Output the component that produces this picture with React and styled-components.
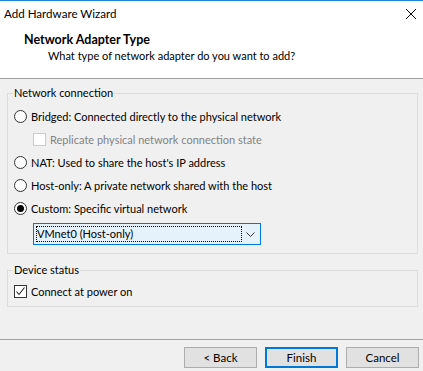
import React from "react";
import styled, { createGlobalStyle } from "styled-components";

const Global = createGlobalStyle`
  html, body { margin: 0; padding: 0; }
  body {
    font-family: Lato, "Noto Sans", "Liberation Sans", sans-serif;
    font-size: 11px;
    color: #000;
    background: #fff;
  }
`;

const Window = styled.div`
  width: 423px;
  height: 371px;
  overflow: hidden;
  display: flex;
  flex-direction: column;
  border-top: 1px solid #1a86d9;
  box-sizing: border-box;
  background: #f0f0f0;
`;

const Top = styled.div`
  background: #fff;
  height: 77px;
  display: flex;
  flex-direction: column;
  border-bottom: 1px solid #a0a0a0;
`;

const TitleBar = styled.div`
  height: 26px;
  display: flex;
  align-items: center;
  justify-content: space-between;
  padding: 0 7px 0 4px;
`;

const Title = styled.span`
  font-size: 11.6px;
  line-height: 16px;
`;

const CloseBtn = styled.div`
  width: 10px;
  height: 10px;
  display: flex;
  svg { display: block; }
`;

const Header = styled.div`
  padding: 5px 0 0 24px;
  display: flex;
  flex-direction: column;
`;

const HeadTitle = styled.div`
  font-weight: bold;
  font-size: 12.5px;
  line-height: 16px;
`;

const HeadSub = styled.div`
  padding-left: 24px;
  line-height: 16px;
`;

const Body = styled.div`
  flex: 1;
  padding: 6px 5px 0 7px;
  display: flex;
  flex-direction: column;
  gap: 8px;
`;

const Group = styled.fieldset`
  margin: 0;
  border: 1px solid #dcdcdc;
  padding: ${(p) => p.$pad};
  display: flex;
  flex-direction: column;
  legend {
    padding: 0 1px;
    margin-left: 5px;
    line-height: 16px;
  }
`;

const Row = styled.label`
  height: 23px;
  display: flex;
  align-items: center;
  gap: 4px;
  padding-left: ${(p) => p.$indent || 6}px;
  color: ${(p) => (p.$disabled ? "#838383" : "#000")};
`;

const Radio = styled.span`
  width: 13px;
  height: 13px;
  box-sizing: border-box;
  border-radius: 50%;
  border: 1px solid #333;
  background: #fff;
  display: flex;
  align-items: center;
  justify-content: center;
  &::after {
    content: "";
    width: 7px;
    height: 7px;
    border-radius: 50%;
    background: ${(p) => (p.$on ? "#000" : "transparent")};
  }
`;

const Box = styled.span`
  width: 13px;
  height: 13px;
  box-sizing: border-box;
  border: 1px solid ${(p) => (p.$disabled ? "#cccccc" : "#333")};
  background: #fff;
  display: flex;
  align-items: center;
  justify-content: center;
  svg { display: block; }
`;

const Select = styled.div`
  margin: 3px 0 0 25px;
  width: 228px;
  height: 22px;
  box-sizing: border-box;
  border: 1px solid #0078d7;
  background: #e5f1fb;
  display: flex;
  align-items: center;
  padding: 0 5px 0 2px;
  justify-content: space-between;
`;

const Focus = styled.span`
  width: 206px;
  height: 16px;
  box-sizing: border-box;
  border: 1px dotted #000;
  line-height: 14px;
`;

const Footer = styled.div`
  height: 32px;
  border-top: 1px solid #a0a0a0;
  display: flex;
  justify-content: flex-end;
  align-items: flex-start;
  gap: 8px;
  padding: 7px 4px 0 0;
  box-sizing: border-box;
`;

const Button = styled.button`
  width: 73px;
  height: 21px;
  box-sizing: border-box;
  font: inherit;
  font-size: 11.5px;
  color: #000;
  background: #e1e1e1;
  border: ${(p) => (p.$default ? "2px solid #0078d7" : "1px solid #adadad")};
  padding: 0;
`;

const Chevron = () => (
  <svg width="9" height="5" viewBox="0 0 9 5">
    <path d="M0.5 0.5 L4.5 4.5 L8.5 0.5" fill="none" stroke="#333" strokeWidth="1" />
  </svg>
);

const Check = () => (
  <svg width="11" height="11" viewBox="0 0 11 11">
    <path d="M1.5 5.5 L4 8.5 L9.5 1.5" fill="none" stroke="#222" strokeWidth="1.1" />
  </svg>
);

export default function App() {
  return (
    <Window>
      <Global />
      <Top>
        <TitleBar>
          <Title>Add Hardware Wizard</Title>
          <CloseBtn>
            <svg width="10" height="10" viewBox="0 0 10 10">
              <path d="M0 0 L10 10 M10 0 L0 10" stroke="#000" strokeWidth="1" />
            </svg>
          </CloseBtn>
        </TitleBar>
        <Header>
          <HeadTitle>Network Adapter Type</HeadTitle>
          <HeadSub>What type of network adapter do you want to add?</HeadSub>
        </Header>
      </Top>
      <Body>
        <Group $pad="4px 0 8px 0">
          <legend>Network connection</legend>
          <Row>
            <Radio />
            Bridged: Connected directly to the physical network
          </Row>
          <Row $indent={25} $disabled>
            <Box $disabled />
            Replicate physical network connection state
          </Row>
          <Row>
            <Radio />
            NAT: Used to share the host's IP address
          </Row>
          <Row>
            <Radio />
            Host-only: A private network shared with the host
          </Row>
          <Row>
            <Radio $on />
            Custom: Specific virtual network
          </Row>
          <Select>
            <Focus>VMnet0 (Host-only)</Focus>
            <Chevron />
          </Select>
        </Group>
        <Group $pad="2px 0 3px 0">
          <legend>Device status</legend>
          <Row>
            <Box>
              <Check />
            </Box>
            Connect at power on
          </Row>
        </Group>
      </Body>
      <Footer>
        <Button>&lt; Back</Button>
        <Button $default>Finish</Button>
        <Button>Cancel</Button>
      </Footer>
    </Window>
  );
}
